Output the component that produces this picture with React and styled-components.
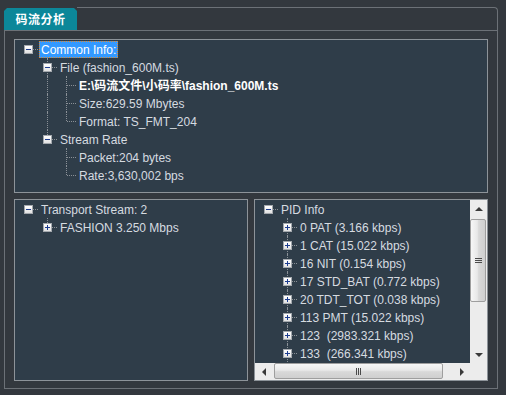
import React from "react";
import styled, { createGlobalStyle } from "styled-components";

const Global = createGlobalStyle`
  html, body { margin: 0; padding: 0; background: #33383e; }
  body {
    width: 506px; height: 395px; overflow: hidden;
    font-family: "Liberation Sans", "Noto Sans CJK SC", Arial, sans-serif;
  }
  * { box-sizing: border-box; }
`;

const LINE = "#6c7177";
const PANEL_BORDER = "#8d9399";
const DOT = "#8a9096";

const Page = styled.div`
  padding: 7px 0 0 4px;
`;

const Widget = styled.div`
  width: 494px;
`;

const Header = styled.div`
  display: flex;
  height: 23px;
`;

const Tab = styled.div`
  width: 73px;
  height: 22px;
  margin-top: 1px;
  background: #0c8799;
  clip-path: polygon(3px 0, calc(100% - 3px) 0, 100% 3px, 100% 100%, 0 100%, 0 3px);
  color: #ffffff;
  font-family: "Noto Sans CJK SC", "Liberation Sans", sans-serif;
  font-weight: 700;
  font-size: 12px;
  line-height: 22px;
  text-align: center;
  letter-spacing: 0.5px;
`;

const HeaderRest = styled.div`
  flex: 1;
  height: 23px;
  border-top: 1px solid ${LINE};
  border-right: 1px solid ${LINE};
  border-top-right-radius: 4px;
`;

const Body = styled.div`
  height: 359px;
  border: 1px solid ${LINE};
  padding: 8px 9px 7px 9px;
  display: flex;
  flex-direction: column;
  gap: 6px;
`;

const Panel = styled.div`
  height: ${(p) => p.$h}px;
  background: #2f3d49;
  border: 1px solid ${PANEL_BORDER};
  overflow: hidden;
`;

const BottomRow = styled.div`
  display: grid;
  grid-template-columns: 234px 234px;
  gap: 6px;
`;

const ScrollPanel = styled(Panel)`
  display: grid;
  grid-template-columns: 1fr 17px;
  grid-template-rows: 1fr 17px;
`;

const TreeArea = styled.div`
  overflow: hidden;
  padding-left: 4px;
  min-width: 0;
`;

const Row = styled.div`
  display: flex;
  height: 18px;
  white-space: nowrap;
`;

const Cell = styled.span`
  position: relative;
  flex: none;
  width: 19px;
  height: 18px;
  &::before {
    content: "";
    position: absolute;
    left: 9px;
    top: ${(p) => (p.$top ? 0 : 9)}px;
    bottom: ${(p) => (p.$bottom ? 0 : 9)}px;
    border-left: 1px dotted ${DOT};
    display: ${(p) => (p.$top || p.$bottom ? "block" : "none")};
  }
  &::after {
    content: "";
    position: absolute;
    left: 10px;
    right: 0;
    top: 9px;
    border-top: 1px dotted ${DOT};
    display: ${(p) => (p.$across ? "block" : "none")};
  }
`;

const Expander = styled.span`
  position: absolute;
  z-index: 1;
  left: 5px;
  top: 5px;
  width: 9px;
  height: 9px;
  border: 1px solid #a4a9ae;
  background: linear-gradient(#ffffff, #e2e2e2);
  &::before {
    content: "";
    position: absolute;
    left: 1px;
    top: 3px;
    width: 5px;
    height: 1px;
    background: #1d3d8f;
  }
  &::after {
    content: "";
    position: absolute;
    left: 3px;
    top: 1px;
    width: 1px;
    height: 5px;
    background: #1d3d8f;
    display: ${(p) => (p.$open ? "none" : "block")};
  }
`;

const Label = styled.span`
  margin: 1px 0 0 1px;
  height: 17px;
  padding: 0 1px;
  border: 1px ${(p) => (p.$selected ? "dotted #e0882c" : "solid transparent")};
  background: ${(p) => (p.$selected ? "#3399ff" : "transparent")};
  color: ${(p) => (p.$selected || p.$bold ? "#ffffff" : "#d6dbe0")};
  font-weight: ${(p) => (p.$bold ? 700 : 400)};
  font-size: 12px;
  line-height: 16px;
  white-space: pre;
`;

const VScroll = styled.div`
  background: #ececec;
  display: flex;
  flex-direction: column;
  align-items: stretch;
`;

const HScroll = styled.div`
  background: #ececec;
  display: flex;
  align-items: stretch;
`;

const Corner = styled.div`
  background: #ececec;
`;

const ArrowBtn = styled.div`
  flex: none;
  width: 17px;
  height: 17px;
  display: flex;
  align-items: center;
  justify-content: center;
  &::before {
    content: "";
    width: 0;
    height: 0;
    ${(p) =>
      p.$dir === "up"
        ? "border-left: 4px solid transparent; border-right: 4px solid transparent; border-bottom: 4px solid #3a3a3a;"
        : p.$dir === "down"
        ? "border-left: 4px solid transparent; border-right: 4px solid transparent; border-top: 4px solid #3a3a3a;"
        : p.$dir === "left"
        ? "border-top: 4px solid transparent; border-bottom: 4px solid transparent; border-right: 4px solid #3a3a3a;"
        : "border-top: 4px solid transparent; border-bottom: 4px solid transparent; border-left: 4px solid #3a3a3a;"}
  }
`;

const Track = styled.div`
  flex: 1;
  display: flex;
  flex-direction: ${(p) => (p.$vertical ? "column" : "row")};
  padding: ${(p) => (p.$vertical ? "2px 1px 0 0" : "0 0 1px 2px")};
`;

const Thumb = styled.div`
  flex: none;
  ${(p) => (p.$vertical ? "height: 83px;" : "width: 169px;")}
  border: 1px solid #9e9e9e;
  border-radius: 2px;
  background: ${(p) =>
    p.$vertical
      ? "linear-gradient(to right, #f7f7f7, #e8e8e8 45%, #d9d9d9 55%, #cfcfcf)"
      : "linear-gradient(#f7f7f7, #e8e8e8 45%, #d9d9d9 55%, #cfcfcf)"};
  display: flex;
  align-items: center;
  justify-content: center;
`;

const Grip = styled.span`
  display: flex;
  flex-direction: ${(p) => (p.$vertical ? "column" : "row")};
  gap: 1px;
  & > i {
    display: block;
    background: #4a4a4a;
    ${(p) => (p.$vertical ? "width: 7px; height: 1px;" : "width: 1px; height: 7px;")}
  }
`;

const commonTree = [
  {
    label: "Common Info:",
    selected: true,
    children: [
      {
        label: "File (fashion_600M.ts)",
        children: [
          { label: "E:\\码流文件\\小码率\\fashion_600M.ts", bold: true },
          { label: "Size:629.59 Mbytes" },
          { label: "Format: TS_FMT_204" },
        ],
      },
      {
        label: "Stream Rate",
        children: [{ label: "Packet:204 bytes" }, { label: "Rate:3,630,002 bps" }],
      },
    ],
  },
];

const transportTree = [
  {
    label: "Transport Stream: 2",
    children: [{ label: "FASHION 3.250 Mbps", collapsed: true, children: [{ label: "" }] }],
  },
];

const pidItems = [
  "0 PAT (3.166 kbps)",
  "1 CAT (15.022 kbps)",
  "16 NIT (0.154 kbps)",
  "17 STD_BAT (0.772 kbps)",
  "20 TDT_TOT (0.038 kbps)",
  "113 PMT (15.022 kbps)",
  "123  (2983.321 kbps)",
  "133  (266.341 kbps)",
];

const pidTree = [
  {
    label: "PID Info",
    more: true,
    children: pidItems.map((l) => ({ label: l, collapsed: true, children: [{ label: "" }] })),
  },
];

function flatten(nodes, level = 0, ancestors = [], parentMore = false) {
  const rows = [];
  nodes.forEach((n, i) => {
    const hasNext = i < nodes.length - 1 || parentMore;
    rows.push({ node: n, level, ancestors, hasNext });
    if (n.children && !n.collapsed) {
      rows.push(...flatten(n.children, level + 1, [...ancestors, hasNext], !!n.more));
    }
  });
  return rows;
}

function Tree({ data }) {
  const rows = flatten(data);
  return rows.map(({ node, level, ancestors, hasNext }, idx) => (
    <Row key={idx}>
      {ancestors.map((a, k) => (
        <Cell key={k} $top={a} $bottom={a} />
      ))}
      <Cell $top={level > 0} $bottom={hasNext} $across>
        {node.children && <Expander $open={!node.collapsed} />}
      </Cell>
      <Label $selected={node.selected} $bold={node.bold}>
        {node.label}
      </Label>
    </Row>
  ));
}

export default function App() {
  return (
    <>
      <Global />
      <Page>
        <Widget>
          <Header>
            <Tab>码流分析</Tab>
            <HeaderRest />
          </Header>
          <Body>
            <Panel $h={154}>
              <TreeArea>
                <Tree data={commonTree} />
              </TreeArea>
            </Panel>
            <BottomRow>
              <Panel $h={182}>
                <TreeArea>
                  <Tree data={transportTree} />
                </TreeArea>
              </Panel>
              <ScrollPanel $h={182}>
                <TreeArea>
                  <Tree data={pidTree} />
                </TreeArea>
                <VScroll>
                  <ArrowBtn $dir="up" />
                  <Track $vertical>
                    <Thumb $vertical>
                      <Grip $vertical>
                        <i />
                        <i />
                        <i />
                      </Grip>
                    </Thumb>
                  </Track>
                  <ArrowBtn $dir="down" />
                </VScroll>
                <HScroll>
                  <ArrowBtn $dir="left" />
                  <Track>
                    <Thumb>
                      <Grip>
                        <i />
                        <i />
                        <i />
                      </Grip>
                    </Thumb>
                  </Track>
                  <ArrowBtn $dir="right" />
                </HScroll>
                <Corner />
              </ScrollPanel>
            </BottomRow>
          </Body>
        </Widget>
      </Page>
    </>
  );
}
